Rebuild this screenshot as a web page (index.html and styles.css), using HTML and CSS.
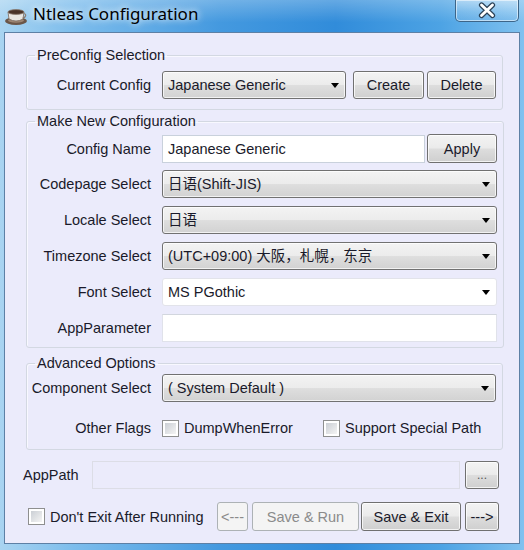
FILE: index.html
```html
<!DOCTYPE html>
<html lang="en">
<head>
    <meta charset="UTF-8">
    <title>Ntleas Configuration</title>
    <link rel="stylesheet" href="styles.css">
</head>
<body>
    <div class="window">
        <div class="titlebar">
            <svg class="app-icon" width="24" height="20" viewBox="0 0 24 20">
                <ellipse cx="12" cy="15" rx="11" ry="4" fill="#6b5648"/>
                <ellipse cx="12" cy="14.5" rx="8" ry="2.2" fill="#9c8472"/>
                <path d="M4 6 L5 13 Q12 17 19 13 L20 6 Z" fill="#e9e6e2"/>
                <path d="M4 6 L5 13 Q12 17 19 13 L20 6 Z" fill="none" stroke="#7a6a5e" stroke-width="0.8"/>
                <path d="M19.5 7.5 Q23 8 21 11 Q20 12 18.8 11.5" fill="none" stroke="#8a7a6e" stroke-width="1.2"/>
                <ellipse cx="12" cy="6" rx="8" ry="2.4" fill="#4a3328" stroke="#8a7a6e" stroke-width="0.8"/>
            </svg>
            <span class="title">Ntleas Configuration</span>
            <div class="close-btn">
                <svg width="24" height="17" viewBox="0 0 24 17">
                    <path d="M6.5 3 L17.5 13.5 M17.5 3 L6.5 13.5" stroke="#2b4258" stroke-width="5.2" stroke-linecap="round"/>
                    <path d="M6.5 3 L17.5 13.5 M17.5 3 L6.5 13.5" stroke="#ffffff" stroke-width="2.8" stroke-linecap="round"/>
                </svg>
            </div>
        </div>

        <div class="client">
            <fieldset class="group group-pre">
                <legend>PreConfig Selection</legend>
                <div class="row">
                    <label>Current Config</label>
                    <div class="controls">
                        <div class="combo combo-short">Japanese Generic<span class="arrow"></span></div>
                        <button class="btn btn-create">Create</button>
                        <button class="btn btn-delete">Delete</button>
                    </div>
                </div>
            </fieldset>

            <fieldset class="group group-new">
                <legend>Make New Configuration</legend>
                <div class="row">
                    <label>Config Name</label>
                    <div class="controls">
                        <div class="textbox textbox-name">Japanese Generic</div>
                        <button class="btn btn-apply">Apply</button>
                    </div>
                </div>
                <div class="row">
                    <label>Codepage Select</label>
                    <div class="combo">日语(Shift-JIS)<span class="arrow"></span></div>
                </div>
                <div class="row">
                    <label>Locale Select</label>
                    <div class="combo">日语<span class="arrow"></span></div>
                </div>
                <div class="row">
                    <label>Timezone Select</label>
                    <div class="combo">(UTC+09:00) 大阪，札幌，东京<span class="arrow"></span></div>
                </div>
                <div class="row">
                    <label>Font Select</label>
                    <div class="combo combo-edit">MS PGothic<span class="arrow"></span></div>
                </div>
                <div class="row">
                    <label>AppParameter</label>
                    <div class="textbox"></div>
                </div>
            </fieldset>

            <fieldset class="group group-adv">
                <legend>Advanced Options</legend>
                <div class="row">
                    <label>Component Select</label>
                    <div class="combo">( System Default )<span class="arrow"></span></div>
                </div>
                <div class="row row-flags">
                    <label>Other Flags</label>
                    <div class="flags">
                        <span class="check-item check-dump"><span class="checkbox"></span>DumpWhenError</span>
                        <span class="check-item"><span class="checkbox"></span>Support Special Path</span>
                    </div>
                </div>
            </fieldset>

            <div class="path-row">
                <label>AppPath</label>
                <div class="textbox textbox-path"></div>
                <button class="btn btn-browse">...</button>
            </div>

            <div class="bottom-row">
                <span class="check-item"><span class="checkbox"></span>Don't Exit After Running</span>
                <div class="bottom-buttons">
                    <button class="btn btn-prev" disabled>&lt;---</button>
                    <button class="btn btn-run" disabled>Save &amp; Run</button>
                    <button class="btn btn-exit">Save &amp; Exit</button>
                    <button class="btn btn-next">---&gt;</button>
                </div>
            </div>
        </div>
    </div>
</body>
</html>
```

FILE: styles.css
```css
body {
    margin: 0;
    font-family: "Liberation Sans", "Noto Sans CJK SC", sans-serif;
    font-size: 14.5px;
    color: #1a1a2a;
}
.window {
    width: 524px;
    height: 550px;
    display: flex;
    flex-direction: column;
    background: linear-gradient(90deg, #a9d4f1 0%, #7dbdec 14%, #4499df 42%, #318cda 64%, #4da3e4 84%, #80c1ef 100%);
}
.titlebar {
    height: 32px;
    display: flex;
    align-items: flex-start;
    background: linear-gradient(180deg, rgba(255,255,255,0.25), rgba(255,255,255,0) 70%);
}
.app-icon {
    margin: 6px 0 0 4px;
}
.title {
    margin: 2px 0 0 5px;
    font-family: "Noto Sans", sans-serif;
    font-size: 17px;
    color: #000;
    text-shadow: 0 0 6px rgba(255,255,255,0.9), 0 0 10px rgba(255,255,255,0.6);
}
.close-btn {
    margin-left: auto;
    margin-right: 5px;
    width: 64px;
    height: 22px;
    box-sizing: border-box;
    border: 1px solid #3d6588;
    border-top: none;
    border-radius: 0 0 5px 5px;
    box-shadow: inset 0 0 0 1px rgba(255,255,255,0.55);
    background: linear-gradient(180deg, rgba(255,255,255,0.35), rgba(255,255,255,0.1) 55%, rgba(120,180,230,0.3));
    display: flex;
    justify-content: center;
    align-items: center;
}
.client {
    flex: 1;
    margin: 0 4px 6px 4px;
    background: #ebebfb;
    border: 1px solid #5d80a5;
    padding: 14px 0 0 0;
    display: flex;
    flex-direction: column;
}
.group {
    margin: 0 0 0 21px;
    width: 477px;
    box-sizing: border-box;
    border: 1px solid #d3d8e2;
    border-radius: 3px;
    box-shadow: inset 1px 1px 0 #f8f8ff;
    padding: 0 6px 0 0;
    display: flex;
    flex-direction: column;
    gap: 8px;
}
.group legend {
    margin-left: 8px;
    padding: 0 2px;
    line-height: 16px;
}
.group-pre {
    padding-top: 8px;
    padding-bottom: 10px;
}
.group-new {
    margin-top: 3px;
    padding-top: 5px;
    padding-bottom: 5px;
}
.group-adv {
    margin-top: 7px;
    padding-top: 3px;
    padding-bottom: 7px;
    gap: 12px;
}
.row {
    display: grid;
    grid-template-columns: 124px 1fr;
    column-gap: 11px;
    align-items: center;
    height: 28px;
}
.row label {
    text-align: right;
    white-space: nowrap;
}
.controls {
    display: flex;
    align-items: center;
}
.combo {
    position: relative;
    height: 28px;
    box-sizing: border-box;
    border: 1px solid #717171;
    border-radius: 3px;
    background: linear-gradient(180deg, #f3f3f3 0%, #ececec 48%, #dedede 52%, #d2d2d2 100%);
    box-shadow: inset 0 0 0 1px rgba(255,255,255,0.7);
    padding: 0 0 0 5px;
    line-height: 26px;
    white-space: nowrap;
}
.combo-short {
    width: 184px;
}
.combo-edit {
    background: #fff;
    border-color: #e2e3ea;
    box-shadow: none;
}
.arrow {
    position: absolute;
    right: 6px;
    top: 11px;
    width: 0;
    height: 0;
    border-left: 4.5px solid transparent;
    border-right: 4.5px solid transparent;
    border-top: 5px solid #000;
}
.textbox {
    height: 28px;
    box-sizing: border-box;
    background: #fff;
    border: 1px solid #e0e2ea;
    border-top-color: #d2d6de;
    padding: 0 5px;
    line-height: 26px;
}
.textbox-name {
    width: 263px;
    border-color: #c9d1dc;
}
.btn {
    height: 28px;
    box-sizing: border-box;
    border: 1px solid #707070;
    border-radius: 3px;
    background: linear-gradient(180deg, #f3f3f3 0%, #ebebeb 48%, #dddddd 52%, #cfcfcf 100%);
    box-shadow: inset 0 0 0 1px rgba(255,255,255,0.75);
    font-family: inherit;
    font-size: 14.5px;
    color: #1a1a2a;
    padding: 0;
}
.btn:disabled {
    background: #f4f4f4;
    border-color: #adb2b5;
    color: #8b8b8b;
    box-shadow: none;
}
.btn-create {
    width: 71px;
    margin-left: 7px;
}
.btn-delete {
    width: 69px;
    margin-left: 3px;
}
.btn-apply {
    width: 70px;
    margin-left: 2px;
    height: 29px;
}
.flags {
    display: flex;
    align-items: center;
}
.check-item {
    display: flex;
    align-items: center;
    gap: 5px;
    white-space: nowrap;
}
.check-dump {
    width: 161px;
}
.checkbox {
    width: 17px;
    height: 17px;
    box-sizing: border-box;
    border: 1px solid #8e8f8f;
    background: #fff;
    padding: 2px;
    display: inline-block;
    flex-shrink: 0;
}
.checkbox::after {
    content: "";
    display: block;
    width: 100%;
    height: 100%;
    background: linear-gradient(135deg, #cbcfd5, #f4f4f4);
}
.path-row {
    margin: 11px 0 0 18px;
    display: flex;
    align-items: center;
}
.path-row label {
    width: 69px;
}
.textbox-path {
    width: 368px;
    background: #ebebfb;
    border-color: #dcdde6;
}
.btn-browse {
    width: 34px;
    margin-left: 5px;
    height: 28px;
    color: #555;
    font-size: 12px;
}
.bottom-row {
    margin: 13px 20px 0 23px;
    display: flex;
    align-items: center;
}
.bottom-buttons {
    margin-left: auto;
    display: flex;
    align-items: center;
}
.bottom-buttons .btn {
    height: 29px;
}
.btn-prev {
    width: 31px;
}
.btn-run {
    width: 107px;
    margin-left: 4px;
}
.btn-exit {
    width: 100px;
    margin-left: 2px;
}
.btn-next {
    width: 34px;
    margin-left: 4px;
}
```
